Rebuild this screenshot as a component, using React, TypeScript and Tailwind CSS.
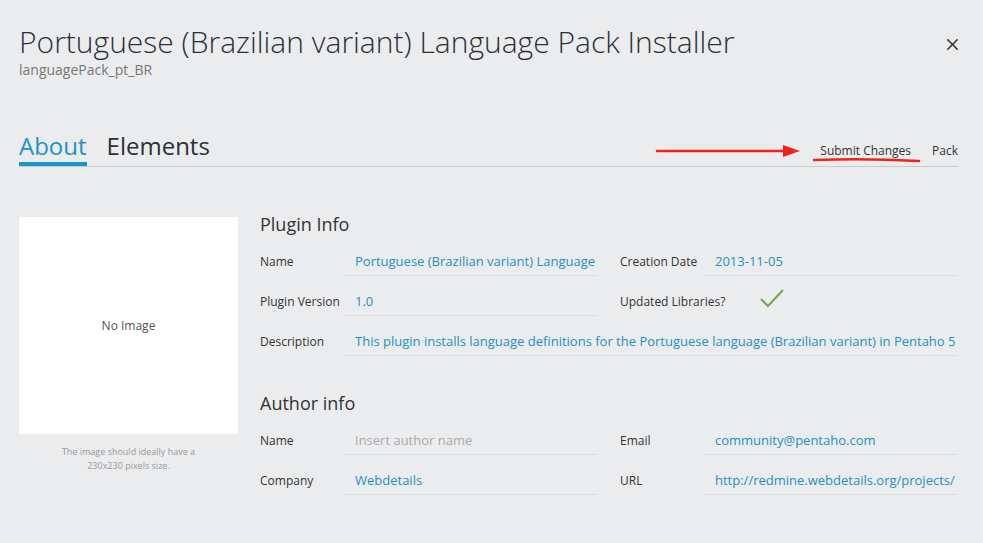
import { X } from "lucide-react";

const font = { fontFamily: '"Open Sans", "Liberation Sans", sans-serif' };

type Field = { label: string; value: string; placeholder?: boolean; check?: boolean };

function Row({ label, value, placeholder, check, wide }: Field & { wide?: boolean }) {
  return (
    <div className={`flex ${wide ? "w-full" : "w-[337px]"}`}>
      <div className="flex h-[40px] w-[84px] shrink-0 items-end whitespace-nowrap pb-[5px] text-[12px] text-[#333]">
        {label}
      </div>
      <div
        className={`flex h-[40px] min-w-0 flex-1 items-end overflow-hidden whitespace-nowrap pb-[4px] pl-[11px] text-[13px] ${
          check ? "" : "border-b border-[#dcdde0]"
        } ${placeholder ? "text-[#aaa]" : "text-[#2590c3]"}`}
      >
        {check ? (
          <svg width="26" height="20" viewBox="0 0 26 20" className="mb-[4px] ml-[44px]">
            <path d="M2 11 L9 18 L24 2" fill="none" stroke="#6aa84f" strokeWidth="2" />
          </svg>
        ) : (
          value
        )}
      </div>
    </div>
  );
}

function Section({ title, rows, extra }: { title: string; rows: [Field, Field][]; extra?: Field }) {
  return (
    <div>
      <h2 className="text-[18px] leading-[14px] text-[#333]">{title}</h2>
      <div className="mt-[5px] flex flex-col">
        {rows.map(([a, b]) => (
          <div key={a.label} className="flex gap-[23px]">
            <Row {...a} />
            <Row {...b} />
          </div>
        ))}
        {extra && <Row {...extra} wide />}
      </div>
    </div>
  );
}

export default function App() {
  return (
    <div className="min-h-[543px] w-full bg-[#ebecee] pl-[19px] pr-[25px] pt-[24px]" style={font}>
      <div className="flex items-start justify-between">
        <div>
          <h1 className="text-[30px] font-light leading-[36px] text-[#2d3136]">
            Portuguese (Brazilian variant) Language Pack Installer
          </h1>
          <p className="mt-[2px] text-[14px] leading-[16px] text-[#777]">languagePack_pt_BR</p>
        </div>
        <X className="mr-[-4px] mt-[11px] h-[19px] w-[19px] text-[#333]" strokeWidth={2} />
      </div>

      <div className="relative mt-[53px] flex items-end justify-between border-b border-[#c9cacc]">
        <div className="flex gap-[20px]">
          <div className="border-b-4 border-[#1a95c4] pb-[1px] text-[24px] leading-[30px] text-[#1a95c4]">About</div>
          <div className="pb-[5px] text-[24px] leading-[30px] text-[#2d3136]">Elements</div>
        </div>
        <div className="flex gap-[21px] pb-[6px] text-[12px] text-[#333]">
          <span>Submit Changes</span>
          <span>Pack</span>
        </div>
        <svg className="absolute left-[636px] top-[10px]" width="270" height="26" viewBox="0 0 270 26">
          <line x1="2" y1="10" x2="130" y2="10" stroke="#f0231c" strokeWidth="2.5" strokeLinecap="round" />
          <path d="M128 4 L145 10 L128 16 Z" fill="#f0231c" />
          <path d="M159 19 Q210 17 264 20" fill="none" stroke="#f0231c" strokeWidth="2.5" strokeLinecap="round" />
        </svg>
      </div>

      <div className="mt-[50px] flex gap-[22px]">
        <div className="w-[219px] shrink-0">
          <div className="flex h-[217px] items-center justify-center bg-white text-[12px] text-[#555]">No Image</div>
          <p className="mt-[11px] text-center text-[9px] leading-[14px] text-[#999]">
            The image should ideally have a
            <br />
            230x230 pixels size.
          </p>
        </div>
        <div className="flex w-[697px] flex-col gap-[40px]">
          <Section
            title="Plugin Info"
            rows={[
              [
                { label: "Name", value: "Portuguese (Brazilian variant) Language" },
                { label: "Creation Date", value: "2013-11-05" },
              ],
              [
                { label: "Plugin Version", value: "1.0" },
                { label: "Updated Libraries?", value: "", check: true },
              ],
            ]}
            extra={{
              label: "Description",
              value: "This plugin installs language definitions for the Portuguese language (Brazilian variant) in Pentaho 5",
            }}
          />
          <Section
            title="Author info"
            rows={[
              [
                { label: "Name", value: "Insert author name", placeholder: true },
                { label: "Email", value: "community@pentaho.com" },
              ],
              [
                { label: "Company", value: "Webdetails" },
                { label: "URL", value: "http://redmine.webdetails.org/projects/" },
              ],
            ]}
          />
        </div>
      </div>
    </div>
  );
}
